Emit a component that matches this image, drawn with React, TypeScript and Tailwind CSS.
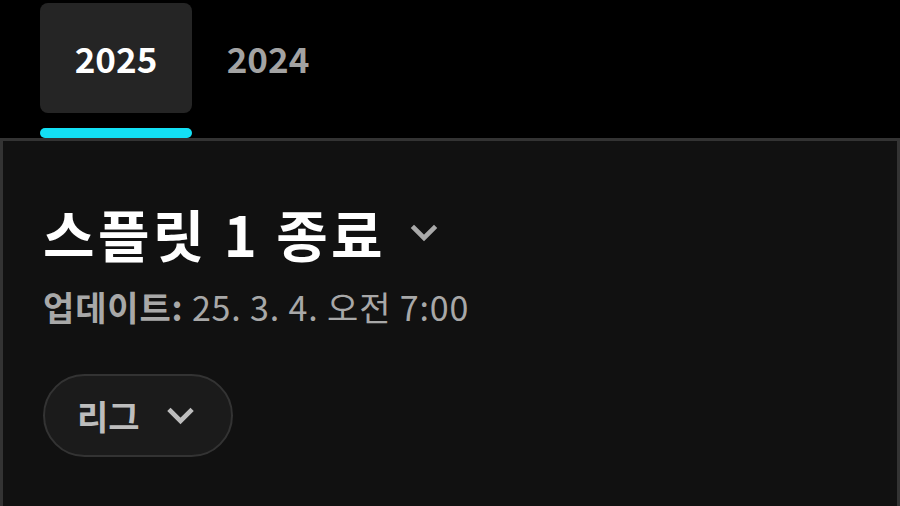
const font = { fontFamily: '"Noto Sans CJK KR", "Noto Sans", sans-serif' }

function Chevron({ className }: { className?: string }) {
  return (
    <svg viewBox="0 0 28 18" className={className} fill="none" aria-hidden="true">
      <polyline
        points="4,4 14,14 24,4"
        stroke="currentColor"
        strokeWidth="4.6"
        strokeLinecap="square"
        strokeLinejoin="miter"
      />
    </svg>
  )
}

export default function App() {
  return (
    <main className="h-screen w-full bg-black overflow-hidden flex flex-col" style={font}>
      <div className="flex pt-[3px] pl-[40px]">
        <div className="flex flex-col w-[152px]">
          <div className="h-[110px] rounded-lg bg-[#252525] flex items-center justify-center text-[35px] font-semibold text-white">
            2025
          </div>
          <div className="mt-[15px] h-[10px] rounded-full bg-[#13e0f5]" />
        </div>
        <div className="flex flex-col w-[152px]">
          <div className="h-[110px] flex items-center justify-center text-[35px] font-semibold text-[#a3a3a3]">
            2024
          </div>
        </div>
      </div>

      <section className="flex-1 border-[3px] border-b-0 border-[#333] bg-[#111] px-[40px] pt-[60px]">
        <div className="flex items-center gap-[24px]">
          <h1 className="text-[56px] leading-[64px] font-bold tracking-[0.06em] text-white">스플릿 1 종료</h1>
          <Chevron className="w-[28px] h-[18px] text-[#a9a9a9]" />
        </div>
        <p className="mt-[20px] text-[34px] leading-[44px] tracking-[0.025em] text-[#a8a8a8]">
          <span className="font-bold">업데이트:</span> 25. 3. 4. 오전 7:00
        </p>
        <button className="mt-[45px] h-[83px] w-[190px] rounded-full border-2 border-[#333] bg-[#1b1b1b] flex items-center pl-[32px] gap-[26px] text-[34px] font-semibold text-[#bdbdbd]">
          리그
          <Chevron className="w-[29px] h-[18px] text-[#bdbdbd]" />
        </button>
      </section>
    </main>
  )
}
